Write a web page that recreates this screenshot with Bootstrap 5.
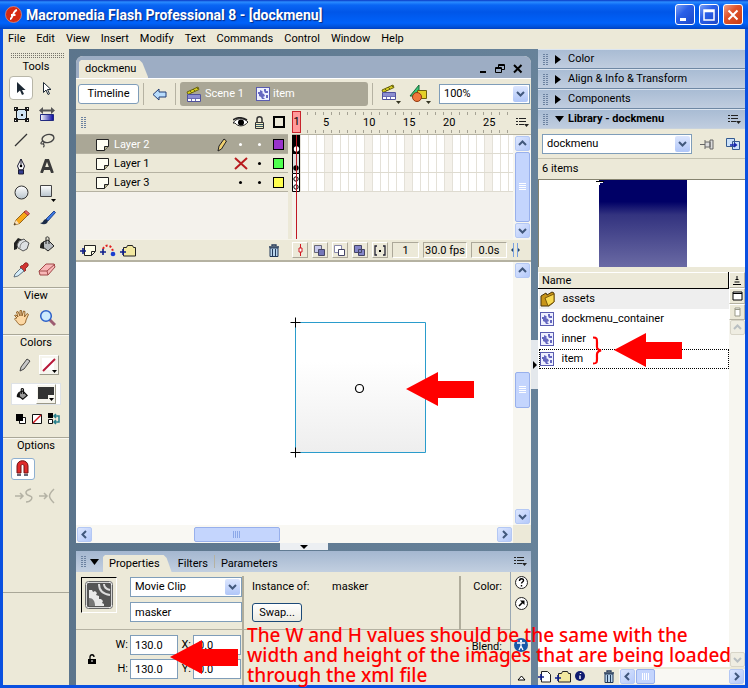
<!DOCTYPE html>
<html lang="en">
<head>
<meta charset="utf-8">
<meta name="viewport" content="width=device-width, initial-scale=1">
<title>Macromedia Flash Professional 8 - [dockmenu]</title>
<link rel="stylesheet" href="https://cdn.jsdelivr.net/npm/bootstrap@5.3.0/dist/css/bootstrap.min.css">
<style>
:root{--face:#ece9d8;--slate:#5f7990;--line:#aca899;--blue:#0a50e0}
body{font:11px/14px Roboto,"Liberation Sans",sans-serif;color:#000;background:var(--face)}
button,input,select{font:inherit;color:inherit}
button{padding:0;border:0;background:none;display:flex;align-items:center;justify-content:center}
svg{display:block;flex:none}
.app{min-height:100vh;border:solid var(--blue);border-width:0 3px 3px}
/* window chrome */
.titlebar{height:29px;background:linear-gradient(#0a38c4,#2a8cff 2px,#0a66f4 5px,#0056e8 12px,#0062fa 23px,#0050d8 27px,#0040c0);margin:0 -3px;padding:0 5px;color:#fff}
.titlebar h1{font:bold 14px/18px Roboto,sans-serif;text-shadow:1px 1px 1px #0a2a80}
.winbtn{width:20px;height:21px;border:1px solid #fff;border-radius:3px;background:linear-gradient(135deg,#7ba0f6,#2a5fe8 40%,#1c48c8)}
.winbtn.closebtn{background:linear-gradient(135deg,#f0a088,#e0542c 40%,#c83c14)}
.menus{height:20px;padding:0 5px;gap:11px}
.menus a,.crumbs a{color:inherit;text-decoration:none}
.work{background:linear-gradient(90deg,#5a738a,#6c88a0) var(--slate)}
/* tools */
.toolcol{width:66px;background:var(--face)}
.grip-h{height:5px;margin:4px 4px 1px 7px;background:conic-gradient(#77756c 25%,transparent 0) 0 0/2px 2px}
.grip-v{width:6px;height:11px;background:conic-gradient(#6c82a0 25%,transparent 0) 0 0/3px 2px;flex:none}
.tgrid{display:grid;grid-template-columns:26px 26px;grid-auto-rows:26px;margin-left:5px}
.tgrid .picked{background:#fff;border:1px solid #b8b6a8;border-radius:4px;margin:1px}
.sec{border-top:1px solid #a9a798;box-shadow:inset 0 1px #f8f7f0}
.sec p,.caption{margin:0;text-align:center;line-height:16px}
.swatchbtn{width:20px;height:20px;border:1px solid #9a9888;border-top-color:#fff;border-left-color:#fff;background:#f6f5ee}
.toolend{margin-top:88px}
.magnet{border:1px solid #8fb0d0;border-radius:3px;background:#fff}
/* document */
.center{padding:7px 0 0 7px;min-width:0}
.doc{border-radius:7px 7px 0 0;background:var(--face);overflow:hidden}
.tabstrip{height:23px;background:#9dadc4;border-bottom:1px solid #fff;padding-left:3px}
.doctab{height:18px;padding:0 12px 0 6px;background:var(--face);clip-path:polygon(0 2px,2px 0,calc(100% - 9px) 0,calc(100% - 6px) 3px,100% 100%,0 100%)}
.editbar{height:31px;padding:0 1px 0 2px;border-bottom:1px solid #b5b2a2}
.editbar .xp-select{width:91px;height:20px}
.timelinebtn{width:61px;height:20px;border:1px solid #7f9db9;border-radius:3px;background:#fff}
.crumbs{height:24px;background:#aaa796;color:#fff;border-radius:3px;padding:0 6px;min-width:0}
.crumbs a{padding:0 12px 0 3px}
.vline{width:1px;align-self:stretch;background:#b5b2a2}
.editbar .vline{margin-top:4px;margin-bottom:4px}
.xp-select{position:relative}
.xp-select select{display:block;width:100%;height:100%;appearance:none;border:1px solid #7f9db9;border-radius:0;background:#fff;padding:0 18px 0 4px}
.xp-select svg{position:absolute;right:2px;top:2px;height:calc(100% - 4px);pointer-events:none}
.xp-input{border:1px solid #7f9db9;background:#fff;padding:0 4px;min-width:0;height:20px;border-radius:0}
/* timeline */
.timeline{height:150px;display:grid;grid-template-columns:212px minmax(0,1fr) 18px;grid-template-rows:25px minmax(0,1fr) 21px;background:var(--face)}
.lhead{border-bottom:1px solid #b5b2a2}
.layers{background:#f4f2ec}
.layer{height:19px;background:var(--face);border-bottom:1px solid #b5b2a2;padding:1px 0 0 20px}
.layer.sel{background:#aaa796;color:#fff}
.layer span{flex:1;padding-left:5px}
.lcol{width:19px;display:flex;justify-content:center;align-items:center}
.outline-box{width:11px;height:11px;border:1px solid #000}
.violet{background:#9933cc}
.green{background:#4fff4f}
.yellow{background:#ffff4f}
.dot{width:3px;height:3px;border-radius:50%;background:currentColor}
.ruler{margin-left:4px;border-bottom:1px solid #b5b2a2;position:relative;overflow:hidden;background:repeating-linear-gradient(90deg,#a5a294 0 1px,transparent 1px 8px) 7px 2px/100% 3px no-repeat,repeating-linear-gradient(90deg,#a5a294 0 1px,transparent 1px 8px) 7px 20px/100% 3px no-repeat}
.ruler ol{list-style:none;display:flex;margin:0;padding:6px 0 0 31px}
.ruler li{width:40px;flex:none}
.frames{margin-left:4px;position:relative;background:#f4f2ec;min-height:0}
.frow{height:19px;border-bottom:1px solid #dedbd0;background:repeating-linear-gradient(90deg,#e4e1d8 0 1px,transparent 1px 8px) 0 0,repeating-linear-gradient(90deg,#fff 0 32px,#f4f1ea 32px 40px) 0 0}
.playhead{position:absolute;left:0;top:1px;width:9px;height:22px;border:1px solid #c8242c;background:#ff9a9a;line-height:20px;text-align:center}
.playline{position:absolute;left:4px;top:0;bottom:0;width:1px;background:#c01824}
.tbar{border-top:1px solid #f6f4ea;padding:0 4px;background:var(--face)}
.framebar{grid-column:2 / 4;overflow:hidden}
.fbtn{width:16px;height:16px;border:1px solid #fff;border-right-color:#aca899;border-bottom-color:#aca899;flex:none}
.readout{width:27px;height:16px;border:1px solid #fff;border-top-color:#aca899;border-left-color:#aca899;text-align:center;line-height:15px;white-space:nowrap;flex:none}
.readout.rate{width:44px}
.readout.time{width:36px}
/* scrollbars */
.sbtn{width:15px;height:15px;border-radius:2px;border:1px solid #b4c8f4;background:linear-gradient(135deg,#dce6fe,#b4c9fa);flex:none}
.sbtn.off{border-color:#d8d5c8;background:#efede2}
.thumb{border-radius:2px;border:1px solid #98b0ec;background:#c4d5fd;display:flex;align-items:center;justify-content:center;flex:none}
.vs{display:flex;flex-direction:column;align-items:center;background:#f7f6f0;gap:1px;padding:1px 0}
.vs .thumb{width:15px}
.vs .tall{flex:1}
.hs{display:flex;align-items:center;background:#f9f8f3;gap:1px;padding:0 1px;min-width:0}
.hs .thumb{height:15px}
.grow-a{flex:93}
.grow-b{flex:101}
.grow-c{flex:216}
#thumbStageV{height:36px}
#thumbStageH{width:86px}
#thumbLib{width:19px}
/* stage */
.stagewrap{display:grid;grid-template-columns:minmax(0,1fr) 18px;grid-template-rows:minmax(0,1fr) 18px;border-top:2px solid #b5b2a2;background:var(--face)}
.stage{background:#fff;position:relative;overflow:hidden;min-height:200px}
.stage-item{position:absolute;left:213px;top:54px}
.handle button{width:48px;background:#eceff2;height:7px}
.handle{height:8px}
/* properties */
.props{position:relative;background:var(--face)}
.ptabs{height:21px;background:linear-gradient(#a4b7d0,#c2cfe0)}
.ptab{padding:0 6px;height:17px;align-self:flex-end}
.ptab.on{background:var(--face);padding-right:12px;clip-path:polygon(0 2px,2px 0,calc(100% - 8px) 0,calc(100% - 5px) 3px,100% 100%,0 100%)}
.prow1{height:58px;border-bottom:1px solid #b5b2a2}
.thumbpic{width:36px;height:36px;margin:5px 13px 0 5px;border:1px solid #000;border-right-color:#fff;border-bottom-color:#fff;display:flex;align-items:center;justify-content:center}
.namefields{width:112px;padding-top:5px}
.symsel{height:20px}
.instname{margin-top:5px}
.leftprops{width:166px}
.whgrid{display:grid;grid-template-columns:26px 48px 15px 48px;row-gap:4px;align-items:center;margin-left:28px;padding:5px 0 6px}
.whgrid label{text-align:right;padding-right:2px}
.lock{position:absolute;left:12px;top:24px}
.inst{width:80px}
.swapbtn{width:50px;height:19px;margin-top:9px;border:1px solid #1c4a78;border-radius:3px;background:linear-gradient(#fff,#ecebe2)}
.thick{width:2px;background:#b0ad9c;align-self:stretch}
.colorsep{flex:none;align-self:flex-start;height:54px;margin-top:4px}
.colorcol{width:49px}
.blendlbl{padding-top:10px}
.iconcol{width:21px;border-left:1px solid #9aa8b4}
.accbtn{margin-top:24px}
.note{position:absolute;z-index:5;color:#f00;margin:0;white-space:nowrap}
.bigtext{left:171px;top:74px;font:500 19px/20px "Noto Sans","Open Sans",sans-serif}
#arrowStage{left:330px;top:109px}
#arrowProps{left:94px;top:88px}
#arrowLib{left:76px;top:60px}
#brace{left:54px;top:64px}
/* library column */
.right{width:214px;padding-left:7px}
.panelhead{height:20px;background:linear-gradient(#a9bcd4,#c0cddf);border-bottom:1px solid #6f88a4;border-top:1px solid #dce5f0;padding-left:4px;gap:7px;margin:0;font:inherit}
.panelhead.open{font-weight:bold;border-bottom-color:#c8d2dc}
.panelhead .tri{margin-right:-3px}
.sidehandle{position:absolute;left:0;top:291px;width:7px;height:49px;background:#e4e8ec}
.lib{background:var(--face);min-height:0}
.libsel{height:29px}
.libsel .xp-select{width:150px;height:20px}
.itemcount{height:21px;border-top:1px solid #c4c1b0}
.preview{height:88px;background:#fff;border:1px solid #85836f;border-right:0;border-bottom:0}
.preview div{width:88px;height:87px;margin-left:60px;background:linear-gradient(#000066 25%,#33337f 40%,#6a6aa4)}
.preview svg{margin-left:-3px}
.listwrap{padding-top:5px}
.libtable{background:#fff}
.libtable table{width:100%;border-collapse:collapse}
.libtable th{font-weight:normal;height:16px;background:var(--face);border:1px solid #fff;border-bottom:1px solid #000;border-right:1px solid #000;padding:0 3px}
.libtable td{height:20px;padding:0 1px}
.libtable tr.folder td{background:#eee}
.libtable tr.focus td{outline:1px dotted #000;outline-offset:-1px}
.iname{padding-left:8px}
.sidebtn{width:16px;height:16px;background:var(--face);border:1px solid #fff;border-right-color:#b5b2a2;border-bottom-color:#b5b2a2}
.sidecol{width:16px}
.libfoot{height:18px}
.libhs{width:126px}
</style>
<script src="https://cdn.jsdelivr.net/npm/bootstrap@5.3.0/dist/js/bootstrap.bundle.min.js"></script>
</head>
<body>
<svg width="0" height="0" class="position-absolute" aria-hidden="true">
 <defs>
  <linearGradient id="gBlue" x2="1"><stop stop-color="#fff"/><stop offset="1" stop-color="#0808a0"/></linearGradient>
  <linearGradient id="gGrey" x2="0" y2="1"><stop stop-color="#fff"/><stop offset="1" stop-color="#b8c4cc"/></linearGradient>
  <linearGradient id="gChev" x2="0" y2="1"><stop stop-color="#dce6fe"/><stop offset="1" stop-color="#b0c6f8"/></linearGradient>
  <linearGradient id="gBox" x2="0" y2="1"><stop offset=".3" stop-color="#fff"/><stop offset="1" stop-color="#eee"/></linearGradient>
 </defs>
 <symbol id="up" viewBox="0 0 9 9"><path d="M1 6 4.500 2.500 8 6" fill="none" stroke="#41587c" stroke-width="2"/></symbol>
 <symbol id="down" viewBox="0 0 9 9"><path d="M1 3 4.500 6.500 8 3" fill="none" stroke="#41587c" stroke-width="2"/></symbol>
 <symbol id="left" viewBox="0 0 9 9"><path d="M6 1 2.500 4.500 6 8" fill="none" stroke="#41587c" stroke-width="2"/></symbol>
 <symbol id="right" viewBox="0 0 9 9"><path d="M3 1 6.500 4.500 3 8" fill="none" stroke="#41587c" stroke-width="2"/></symbol>
 <symbol id="drop" viewBox="0 0 15 16" preserveAspectRatio="none"><rect width="15" height="16" rx="2" fill="url(#gChev)"/><path d="M4 6 7.500 9.500 11 6" fill="none" stroke="#41587c" stroke-width="2"/></symbol>
 <symbol id="optmenu" viewBox="0 0 13 11"><path d="M0 1.500h2M0 4.500h2M0 7.500h2M3 1.500h7M3 4.500h7M3 7.500h5" stroke="#222"/><path d="M8 7h5l-2.500 3z" fill="#222"/></symbol>
 <symbol id="clip" viewBox="0 0 14 14"><rect x=".5" y=".5" width="13" height="13" fill="#eef0fe" stroke="#5a5cb0"/><path d="M2 5h2V3l2 1 1 1-1 1 2 1 1 2-2 1 2 2H6L5 10 3 9V7H2zM8 2h2v2h2v2H9L8 4zM10 8h2v3h-2z" fill="#6668c0"/></symbol>
 <symbol id="scene" viewBox="0 0 16 17"><path d="M1 6 12 1l1 2.500L2 8.500z" fill="#d8d020" stroke="#6a6410"/><path d="m4 5 2 2m1-4 2 2m1-4 2 2" stroke="#6a6410"/><path d="M1.500 8.500h13v7h-13z" fill="#fff" stroke="#50529c"/><path d="M2 9h12v3H2z" fill="#8c8ed0"/><path d="M2 12.500h12M5.500 12v3M9.500 12v3" stroke="#6a6cb4"/></symbol>
 <symbol id="page" viewBox="0 0 13 12"><path d="M.5.500h12v7l-4 4h-8z" fill="#fffff4" stroke="#222"/><path d="M12.500 7.500h-4v4" fill="#b8b490" stroke="#222"/></symbol>
 <symbol id="bin" viewBox="0 0 12 13"><path d="M4 2V1h4v1M1 3h10" stroke="#223858" fill="none" stroke-width="1.300"/><path d="M2 4h8v8.500H2z" fill="#b8d4ec" stroke="#223858"/><path d="M4.500 5v7M7.500 5v7" stroke="#223858"/></symbol>
 <symbol id="arrow" viewBox="0 0 68 36"><path d="M0 18 32 1v9h36v17H32v8z" fill="#f00"/></symbol>
 <symbol id="addfolder" viewBox="0 0 16 13"><path d="M3.500 3.500h3l1-2h5l1 2h2v8.500h-12z" fill="#f2e8a0" stroke="#222"/><path d="M0 8h6M3 5v6" stroke="#10208c" stroke-width="1.600"/></symbol>
 <symbol id="addpage" viewBox="0 0 16 13"><path d="M4.500 1.500h11v6l-4 4h-7z" fill="#fdfde8" stroke="#222"/><path d="M15 7.500h-3.500v4" fill="none" stroke="#222"/><path d="M0 7h6M3 4v6" stroke="#10208c" stroke-width="1.600"/></symbol>
</svg>

<div class="app d-flex flex-column">
 <header class="titlebar d-flex align-items-center">
  <svg width="17" height="17" viewBox="0 0 17 17"><circle cx="8.500" cy="8.500" r="8" fill="#d42a12" stroke="#f4a890" stroke-width=".6"/><path d="M5 13c3 0 2.500-8 7-9M6 9h4.500" fill="none" stroke="#fff" stroke-width="1.800"/></svg>
  <h1 class="m-0 ms-1 flex-grow-1 text-nowrap">Macromedia Flash Professional 8 - [dockmenu]</h1>
  <div class="d-flex gap-1">
   <button class="winbtn" aria-label="Minimize"><svg width="12" height="12"><path d="M1 9h6v3H1z" fill="#fff"/></svg></button>
   <button class="winbtn" aria-label="Restore"><svg width="12" height="12"><path d="M1 1h10v10H1zM1 2.500h10" fill="none" stroke="#fff" stroke-width="1.500"/></svg></button>
   <button class="winbtn closebtn" aria-label="Close"><svg width="12" height="12"><path d="m1.500 1.500 9 9m0-9-9 9" stroke="#fff" stroke-width="2"/></svg></button>
  </div>
 </header>
 <nav class="menus d-flex align-items-center">
  <a href="#">File</a><a href="#">Edit</a><a href="#">View</a><a href="#">Insert</a><a href="#">Modify</a><a href="#">Text</a><a href="#">Commands</a><a href="#">Control</a><a href="#">Window</a><a href="#">Help</a>
 </nav>

 <div class="work d-flex flex-grow-1">
  <aside class="toolcol flex-shrink-0">
   <div class="grip-h"></div>
   <p class="caption">Tools</p>
   <div class="tgrid">
    <button class="picked" aria-label="Selection"><svg width="10" height="15"><path d="M1 1v11l3-2.500L6 14l2-1-2-4h3.500z" fill="#1c2834"/></svg></button>
    <button aria-label="Subselection"><svg width="10" height="15"><path d="M1.500 1.500v10L4 9l2 4.500 1.500-.7L5.500 8.500H9z" fill="#fff" stroke="#1c2834"/></svg></button>
    <button aria-label="Free Transform"><svg width="15" height="15"><path d="M2 2h11v11H2z" fill="#cfe4f4"/><path d="M2.500 2.500h10v10h-10z" fill="none" stroke="#111"/><path d="M0 0h4v4H0zM11 0h4v4h-4zM0 11h4v4H0zM11 11h4v4h-4zM7 7h2v2H7z" fill="#1a1a1a"/><path d="M1 1h1v1H1zM13 1h1v1h-1zM1 13h1v1H1zM13 13h1v1h-1z" fill="#fff"/></svg></button>
    <button aria-label="Gradient Transform"><svg width="16" height="15"><path d="M0 3.500 4 0v2.500h8V0l4 3.500L12 7V4.500H4V7z" fill="#555"/><path d="M1.500 7.500h13v6h-13z" fill="url(#gBlue)" stroke="#222a80"/></svg></button>
    <button aria-label="Line"><svg width="14" height="14"><path d="M1 13 13 1" stroke="#333" stroke-width="1.300"/></svg></button>
    <button aria-label="Lasso"><svg width="16" height="15"><ellipse cx="9" cy="5.500" rx="6" ry="4" transform="rotate(-14 9 5.500)" fill="none" stroke="#444" stroke-width="1.400"/><path d="M4 8c-2 1-3 3-1 3s3-2 1-3M4 11c2 1 1 3 0 3" fill="none" stroke="#444" stroke-width="1.200"/></svg></button>
    <button aria-label="Pen"><svg width="10" height="17"><path d="m5 1 3.500 7L7 12H3L1.500 8z" fill="#fff" stroke="#1c1c34"/><path d="M5 1v7" stroke="#1c1c34"/><circle cx="5" cy="8" r="1.300"/><path d="M2.500 12h5v4h-5z" fill="#333c90" stroke="#1c1c34"/></svg></button>
    <button aria-label="Text"><svg width="14" height="14"><path d="M1.500 14 6 1.500h2L12.500 14M3.500 9.500h7" fill="none" stroke="#3a3a3a" stroke-width="2.800"/></svg></button>
    <button aria-label="Oval"><svg width="15" height="15"><circle cx="7.500" cy="7.500" r="6.500" fill="url(#gGrey)" stroke="#333"/></svg></button>
    <button aria-label="Rectangle"><svg width="18" height="19"><path d="M2.500 2.500h11v11h-11z" fill="url(#gGrey)" stroke="#444"/><path d="M13 16h5l-2.500 3z"/></svg></button>
    <button aria-label="Pencil"><svg width="17" height="16"><path d="m1 15 2-5 9-9 3.500 3.500-9 9z" fill="#f8a818" stroke="#7a4a08" stroke-width=".8"/><path d="m11 2 2-1.500 3.500 3L15 5.500z" fill="#e86868" stroke="#8c2020" stroke-width=".7"/><path d="m1 15 2-5 3 3.500z" fill="#fbe0b8"/><path d="m1 15 .8-2 1.200 1.200z"/></svg></button>
    <button aria-label="Brush"><svg width="17" height="16"><path d="m7 9 8-8 1.500 1.500L9 11z" fill="#3c78e0" stroke="#10307c" stroke-width=".8"/><path d="M1 13c4 0 3-4 6-4l2 2c-1 4-5 4-8 2z" fill="#1c2c48"/></svg></button>
    <button aria-label="Ink Bottle"><svg width="17" height="15"><path d="M1 13V6l4-5 5 2-5 3-1 6z" fill="#222"/><path d="m4 8 2-4 5-2 2 2 3 2-2 6-4 2-3-2-2-1z" fill="#dde0e2" stroke="#555"/><path d="M7 11c0-4 2-6 6-7" fill="none" stroke="#777"/></svg></button>
    <button aria-label="Paint Bucket"><svg width="16" height="16"><path d="M4 6 9 4l6 6-6 5-5-4z" fill="#b8bcc0" stroke="#222"/><path d="M1 12c0-4 1-6 4-6v7z" fill="#222"/><path d="M7 8V2c0-2 3-1 3 0v6" fill="none" stroke="#222"/></svg></button>
    <button aria-label="Eyedropper"><svg width="17" height="16"><path d="M9 4l3-3c2-1 4 1 3 3l-3 3 1 1-1.500 1.500L7 5l1.500-1.500z" fill="#d03430" stroke="#701010" stroke-width=".7"/><path d="m8 6 3 3-6 5-4 1 1-3z" fill="#d4ecf8" stroke="#456" stroke-width=".8"/></svg></button>
    <button aria-label="Eraser"><svg width="18" height="14"><path d="M1 8 8 1h8l1 3-7 8H2z" fill="#f8b8b8" stroke="#a04848"/><path d="M1 8h8l8-7M9 8l1 4" fill="none" stroke="#a04848"/></svg></button>
   </div>
   <div class="sec mt-1">
    <p>View</p>
    <div class="tgrid pb-1">
     <button aria-label="Hand"><svg width="17" height="17"><path d="M4 9 1.500 6.500 3 6l2 2L3.500 3 5 2.500 7 7V1.500h1.500L9 7l1.500-5L12 2.500 11.500 8 14 4.500l1.500 1L13 11c0 3-2 5-5 5s-4-4-6.500-6L3 9z" fill="#fcd8a4" stroke="#8a5a20" stroke-width=".9"/></svg></button>
     <button aria-label="Zoom"><svg width="17" height="17"><path d="m10 10 6 6" stroke="#9c5c70" stroke-width="3"/><circle cx="7" cy="7" r="5.300" fill="#cdeafc" stroke="#2c60c8" stroke-width="1.500"/></svg></button>
    </div>
   </div>
   <div class="sec">
    <p>Colors</p>
    <div class="d-flex align-items-center gap-2 ps-3 py-1">
     <svg width="12" height="14"><path d="m1 13 1-4 6-8 3 2-6 8z" fill="#c8c8c8" stroke="#444"/></svg>
     <button class="swatchbtn" aria-label="Stroke color"><svg width="17" height="17"><path d="M1 1h12v12H1z" fill="#fff"/><path d="m2 14 12-12" stroke="#b81838" stroke-width="2"/><path d="M11 13h5l-2.500 3z"/></svg></button>
    </div>
    <div class="d-flex align-items-center gap-2 bg-white border mt-1 ps-1 ms-2 me-2">
     <svg width="12" height="14" viewBox="0 0 16 16"><path d="M4 6 9 4l6 6-6 5-5-4z" fill="#999" stroke="#111" stroke-width="1.500"/><path d="M1 12c0-4 1-6 4-6v7z" fill="#111"/><path d="M7 8V2c0-2 3-1 3 0v6" fill="none" stroke="#111" stroke-width="1.500"/></svg>
     <button class="swatchbtn" aria-label="Fill color"><svg width="18" height="17"><path d="M1 1h16v12H1z" fill="#333"/><path d="M11 9h7v8h-7z" fill="#f6f5ee"/><path d="M12 12h5l-2.500 3z"/></svg></button>
    </div>
    <div class="d-flex align-items-center gap-1 ps-2 py-2 ms-1">
     <button aria-label="Black and white"><svg width="12" height="12"><path d="M4.500 4.500h6v6h-6z" fill="#fff" stroke="#111"/><path d="M1 1h7v7H1z"/></svg></button>
     <button aria-label="No color"><svg width="12" height="12"><path d="M1.500 1.500h9v9h-9z" fill="#fff" stroke="#111"/><path d="m2 10 8-8" stroke="#d01820" stroke-width="1.500"/></svg></button>
     <button aria-label="Swap colors"><svg width="14" height="12"><path d="M1 0h5v5H1z"/><path d="M1.500 6.500h4v4h-4z" fill="#fff" stroke="#111"/><path d="M7 3h5v6H8m1-8L7 3l2 2m0 2L7 9l2 2" fill="none" stroke="#28808c" stroke-width="1.500"/></svg></button>
    </div>
   </div>
   <div class="sec mt-1">
    <p>Options</p>
    <button class="magnet ms-2 mt-1" aria-label="Snap to Objects"><svg width="22" height="20"><path d="M5 14V7c0-7 11-7 11 0v7h-4V7c0-2-3-2-3 0v7z" fill="#e02828" stroke="#701010"/><path d="M5 15h4v2H5zM12 15h4v2h-4z" fill="#667"/></svg></button>
    <svg class="ms-2 mt-2" width="46" height="16" fill="none" stroke="#b4b2a4" stroke-width="1.500"><path d="M4 8h7M9 5l3 3-3 3M20 1c-8 2-5 6-1 7s1 6-4 6M28 8h7M33 5l3 3-3 3M43 1c-6 6-6 8 0 14"/></svg>
   </div>
   <div class="sec toolend"></div>
  </aside>

  <main class="center flex-grow-1 d-flex flex-column">
   <section class="doc d-flex flex-column flex-grow-1">
    <div class="tabstrip d-flex align-items-end">
     <button class="doctab">dockmenu</button>
     <div class="ms-auto d-flex gap-2 pe-2 pb-1 align-items-center">
      <button aria-label="Minimize document"><svg width="8" height="11"><path d="M1 8h6v2H1z"/></svg></button>
      <button aria-label="Restore document"><svg width="10" height="11"><path d="M3.500 4V1.500h6v5H7M.5 4.500h6v5h-6zM1 5.500h6M4 2.500h6" fill="none" stroke="#000"/></svg></button>
      <button aria-label="Close document"><svg width="10" height="11"><path d="m1 2 7.500 7.500m0-7.500L1 9.500" stroke="#000" stroke-width="2"/></svg></button>
     </div>
    </div>
    <div class="editbar d-flex align-items-center">
     <button class="timelinebtn">Timeline</button>
     <div class="vline ms-1"></div>
     <button class="mx-2" aria-label="Back"><svg width="15" height="13"><path d="M1 6.500 7 1v3h7v5H7v3z" fill="#b8dcfc" stroke="#203c74"/></svg></button>
     <div class="vline me-1"></div>
     <nav class="crumbs d-flex align-items-center flex-grow-1" aria-label="Edit path">
      <svg width="16" height="17"><use href="#scene"/></svg><a class="text-nowrap" href="#">Scene 1</a>
      <svg width="14" height="14"><use href="#clip"/></svg><a href="#">item</a>
     </nav>
     <div class="vline mx-1"></div>
     <button class="mx-1" aria-label="Edit scene"><svg width="20" height="20"><use href="#scene" width="16" height="17"/><path d="M15 17h5l-2.500 3z" fill="#332"/></svg></button>
     <button class="mx-1" aria-label="Edit symbols"><svg width="22" height="20"><path d="M1 12 10 1v11z" fill="#38c878" stroke="#186838"/><path d="M8.500 6.500h9v8h-9z" fill="#e4d028" stroke="#6c6010"/><circle cx="8" cy="13" r="4.500" fill="#f0783c" stroke="#903810"/><path d="M17 17h5l-2.500 3z" fill="#332"/></svg></button>
     <div class="xp-select ms-1"><select aria-label="Zoom level"><option>100%</option></select><svg width="15"><use href="#drop" width="15" height="16"/></svg></div>
    </div>

    <div class="timeline">
     <div class="lhead d-flex align-items-center ps-1">
      <div class="grip-v me-auto"></div>
      <span class="lcol"><svg width="15" height="10"><path d="M0 6c3-5 10-6 15-1-4 5-10 5-13 1z" fill="#fff" stroke="#222"/><circle cx="8" cy="5.500" r="3"/><path d="M0 3c4-3 9-3 14 0" fill="none" stroke="#222" stroke-width="1.500"/></svg></span>
      <span class="lcol"><svg width="11" height="13"><path d="M3 6V3c0-3 5-3 5 0v3" fill="none" stroke="#333" stroke-width="1.500"/><path d="M1.500 6.500h8v6h-8z" fill="#f4ecc0" stroke="#333"/><path d="M2 8.500h7M2 10.500h7" stroke="#356"/></svg></span>
      <span class="lcol"><svg width="12" height="12"><path d="M1 1h10v10H1z" fill="none" stroke="#000" stroke-width="2"/></svg></span>
     </div>
     <div class="ruler"><ol><li>5</li><li>10</li><li>15</li><li>20</li><li>25</li></ol><div class="playhead">1</div></div>
     <div class="lhead d-flex align-items-center justify-content-center"><button aria-label="Timeline options"><svg width="13" height="11"><use href="#optmenu"/></svg></button></div>

     <div class="layers">
      <div class="layer sel d-flex align-items-center"><svg width="13" height="12"><use href="#page"/></svg><span>Layer 2</span><svg class="me-1" width="10" height="14"><path d="m1 13 1-5 5-7 2.500 2-5 8z" fill="#f0d070" stroke="#222"/></svg><i class="lcol"><b class="dot"></b></i><i class="lcol"><b class="dot"></b></i><i class="lcol"><b class="outline-box violet"></b></i></div>
      <div class="layer d-flex align-items-center"><svg width="13" height="12"><use href="#page"/></svg><span>Layer 1</span><i class="lcol"><svg width="14" height="13"><path d="m1 1 12 11M13 1 1 12" stroke="#b81c20" stroke-width="2"/></svg></i><i class="lcol"><b class="dot"></b></i><i class="lcol"><b class="outline-box green"></b></i></div>
      <div class="layer d-flex align-items-center"><svg width="13" height="12"><use href="#page"/></svg><span>Layer 3</span><i class="lcol"><b class="dot"></b></i><i class="lcol"><b class="dot"></b></i><i class="lcol"><b class="outline-box yellow"></b></i></div>
     </div>
     <div class="frames">
      <div class="frow"><svg width="8" height="19"><path d="M0 0h8v19H0z"/><circle cx="4.500" cy="14" r="2.700" fill="#fff"/></svg></div>
      <div class="frow"><svg width="8" height="19"><path d="M0 0h8v19H0z" fill="#ddd"/><path d="M7.500 0v19M.5 0v19" stroke="#000"/><circle cx="4" cy="14" r="2.700"/></svg></div>
      <div class="frow"><svg width="8" height="19"><path d="M.5.500h7v18h-7z" fill="#fff" stroke="#000"/><circle cx="4" cy="14" r="2.200" fill="#fff" stroke="#000"/><circle cx="4" cy="6" r="2.200" fill="#fff" stroke="#000"/></svg></div>
      <div class="playline"></div>
     </div>
     <div class="vs">
      <button class="sbtn" aria-label="Scroll up"><svg width="9" height="9"><use href="#up"/></svg></button>
      <div class="thumb tall"><svg width="7" height="8"><path d="M0 .5h7M0 2.500h7M0 4.500h7M0 6.500h7" stroke="#fff"/></svg></div>
      <button class="sbtn" aria-label="Scroll down"><svg width="9" height="9"><use href="#down"/></svg></button>
     </div>

     <div class="tbar d-flex align-items-center gap-1">
      <button aria-label="Insert layer"><svg width="16" height="13"><use href="#addpage"/></svg></button>
      <button aria-label="Add motion guide"><svg width="16" height="13"><path d="M3 5c2-5 9-5 10 3" fill="none" stroke="#e02020" stroke-width="2" stroke-dasharray="2 2"/><circle cx="13" cy="10" r="2.300" fill="#1c40d0"/><path d="M0 8h6M3 5v6" stroke="#10208c" stroke-width="1.600"/></svg></button>
      <button aria-label="Insert folder"><svg width="16" height="13"><use href="#addfolder"/></svg></button>
      <button class="ms-auto me-1" aria-label="Delete layer"><svg width="12" height="13"><use href="#bin"/></svg></button>
     </div>
     <div class="tbar framebar d-flex align-items-center gap-1">
      <button class="fbtn" aria-label="Center frame"><svg width="9" height="12"><path d="M4.500 0v12" stroke="#d01820"/><path d="M3 4h3v4H3z" fill="#fff" stroke="#d01820"/></svg></button>
      <button class="fbtn" aria-label="Onion skin"><svg width="12" height="11"><path d="M.5.500h7v7h-7z" fill="#c8caec" stroke="#667"/><path d="M4.500 4.500h6v6h-6z" fill="#7476b8" stroke="#446"/></svg></button>
      <button class="fbtn" aria-label="Onion skin outlines"><svg width="12" height="11"><path d="M.5.500h7v7h-7z" fill="#fff" stroke="#88a"/><path d="M4.500 4.500h6v6h-6z" fill="#fff" stroke="#446"/></svg></button>
      <button class="fbtn" aria-label="Edit multiple frames"><svg width="12" height="11"><path d="M.5.500h7v7h-7zM4.500 4.500h6v6h-6z" fill="#8486c8" stroke="#446"/></svg></button>
      <button class="fbtn" aria-label="Modify onion markers"><svg width="12" height="11"><path d="M3 1H1v9h2M9 1h2v9H9" fill="none" stroke="#223" stroke-width="1.300"/><path d="M5 5h2v2H5z"/></svg></button>
      <div class="readout">1</div>
      <div class="readout rate">30.0 fps</div>
      <div class="readout time">0.0s</div>
      <svg width="9" height="14"><path d="M2.500 0v14M6.500 0v14" stroke="#7ba0e0"/><path d="M2 5v4L0 7zM7 5v4l2-2z" fill="#246"/></svg>
     </div>
    </div>

    <div class="stagewrap flex-grow-1">
     <div class="stage">
      <svg class="stage-item" width="140" height="144"><path d="M6.500 6.500h130v130h-130z" fill="url(#gBox)" stroke="#2a9ccc"/><path d="M1.500 6.500h10M6.500 1.500v10M1.500 136.500h10M6.500 131.500v10" stroke="#000"/><circle cx="70.500" cy="72.500" r="4" fill="#fff" stroke="#000" stroke-width="1.200"/></svg>
      <svg class="note" id="arrowStage" width="68" height="36"><use href="#arrow"/></svg>
     </div>
     <div class="vs">
      <button class="sbtn" aria-label="Scroll up"><svg width="9" height="9"><use href="#up"/></svg></button>
      <div class="grow-a"></div>
      <div class="thumb" id="thumbStageV"><svg width="7" height="8"><path d="M0 .5h7M0 2.500h7M0 4.500h7M0 6.500h7" stroke="#fff"/></svg></div>
      <div class="grow-b"></div>
      <button class="sbtn" aria-label="Scroll down"><svg width="9" height="9"><use href="#down"/></svg></button>
     </div>
     <div class="hs">
      <button class="sbtn" aria-label="Scroll left"><svg width="9" height="9"><use href="#left"/></svg></button>
      <div class="grow-b"></div>
      <div class="thumb" id="thumbStageH"><svg width="8" height="7"><path d="M.5 0v7M2.500 0v7M4.500 0v7M6.500 0v7" stroke="#8ca8e8"/></svg></div>
      <div class="grow-c"></div>
      <button class="sbtn" aria-label="Scroll right"><svg width="9" height="9"><use href="#right"/></svg></button>
     </div>
    </div>
   </section>
   <div class="handle d-flex justify-content-center"><button aria-label="Collapse properties"><svg width="8" height="4"><path d="M0 0h8L4 4z"/></svg></button></div>

   <section class="props">
    <div class="ptabs d-flex align-items-center ps-1 pe-1">
     <div class="grip-v"></div><svg class="mx-1" width="9" height="8"><path d="M0 1h9L4.500 7z"/></svg>
     <button class="ptab on">Properties</button><button class="ptab">Filters</button><div class="vline my-1"></div><button class="ptab">Parameters</button>
     <button class="ms-auto" aria-label="Panel options"><svg width="13" height="11"><use href="#optmenu"/></svg></button>
    </div>
    <div class="d-flex">
     <div class="leftprops">
      <div class="prow1 d-flex">
       <div class="thumbpic"><svg width="28" height="28"><rect x="1" y="1" width="26" height="26" rx="3" fill="#555" stroke="#fff" stroke-width="1.500"/><rect x=".5" y=".5" width="27" height="27" rx="3" fill="none" stroke="#666"/><path d="M14 3c0 6 4 10 11 11M19 3c0 3 2 5 6 6" fill="none" stroke="#ddd" stroke-width="2"/><path d="M4 9h3l1 2 2-1 2 2-1 2 3 1v3l2 0 2 2-1 2 2 1v2H4z" fill="#e8e8e8"/><path d="M4 17c4 0 6 3 6 8H4z" fill="#777"/></svg></div>
       <div class="namefields">
        <div class="xp-select symsel"><select aria-label="Symbol behavior"><option>Movie Clip</option></select><svg width="15"><use href="#drop" width="15" height="16"/></svg></div>
        <input class="xp-input instname w-100" aria-label="Instance name" value="masker">
       </div>
      </div>
      <div class="position-relative">
       <div class="whgrid">
        <label for="fw">W:</label><input id="fw" class="xp-input" value="130.0"><label for="fx">X:</label><input id="fx" class="xp-input" value="0.0">
        <label for="fh">H:</label><input id="fh" class="xp-input" value="130.0"><label for="fy">Y:</label><input id="fy" class="xp-input" value="0.0">
       </div>
       <svg class="lock" width="8" height="10"><path d="M2 5V3c0-3 4-3 4 0" fill="none" stroke="#000" stroke-width="1.300"/><path d="M0 5h8v5H0z"/><path d="M4 6v2" stroke="#fff"/></svg>
      </div>
     </div>
     <div class="thick mt-1"></div>
     <div class="flex-grow-1">
      <div class="prow1 ps-2 pt-2">
       <div class="d-flex"><span class="inst">Instance of:</span><span>masker</span></div>
       <button class="swapbtn">Swap...</button>
      </div>
     </div>
     <div class="thick colorsep"></div>
     <div class="colorcol">
      <div class="prow1 pt-2 text-end pe-2">Color:</div>
      <div class="text-end pe-2 blendlbl">Blend:</div>
     </div>
     <div class="d-flex flex-column align-items-center gap-1 pt-1 iconcol">
      <button aria-label="Help"><svg width="13" height="13"><circle cx="6.500" cy="6.500" r="6" fill="#fff" stroke="#222"/><path d="M4.500 5c0-3 4-3 4-.5 0 1.500-2 1.500-2 3M6.500 9v1.500" fill="none" stroke="#000" stroke-width="1.400"/></svg></button>
      <button class="mt-1" aria-label="Open in browser"><svg width="13" height="13"><circle cx="6.500" cy="6.500" r="6" fill="#fff" stroke="#222"/><path d="m4 9 4-4" stroke="#000" stroke-width="1.600"/><path d="M5 3.500h4.500V8z"/></svg></button>
      <button class="accbtn" aria-label="Accessibility"><svg width="14" height="14"><circle cx="7" cy="7" r="7" fill="#1858a8"/><path d="M3 5h8M7 5v3l-2 4m2-4 2 4" fill="none" stroke="#fff" stroke-width="1.300"/><circle cx="7" cy="3" r="1.200" fill="#fff"/></svg></button>
      <button class="mt-auto mb-1" aria-label="Show less"><svg width="9" height="6"><path d="M1 5h7L4.500 1z" fill="#fff" stroke="#000"/></svg></button>
     </div>
    </div>
    <svg class="note" id="arrowProps" width="68" height="36"><use href="#arrow"/></svg>
    <p class="note bigtext">The W and H values should be the same with the<br>width and height of the images that are being loaded<br>through the xml file</p>
   </section>
  </main>

  <aside class="right flex-shrink-0 d-flex flex-column position-relative">
   <button class="sidehandle" aria-label="Collapse panels"><svg width="4" height="8"><path d="M0 0v8l4-4z"/></svg></button>
   <h2 class="panelhead d-flex align-items-center"><i class="grip-v"></i><svg width="6" height="9"><path d="M0 0v9l6-4.500z"/></svg>Color</h2>
   <h2 class="panelhead d-flex align-items-center"><i class="grip-v"></i><svg width="6" height="9"><path d="M0 0v9l6-4.500z"/></svg>Align &amp; Info &amp; Transform</h2>
   <h2 class="panelhead d-flex align-items-center"><i class="grip-v"></i><svg width="6" height="9"><path d="M0 0v9l6-4.500z"/></svg>Components</h2>
   <h2 class="panelhead open d-flex align-items-center"><i class="grip-v"></i><svg class="tri" width="9" height="6"><path d="M0 0h9L4.500 6z"/></svg>Library - dockmenu<button class="ms-auto me-1" aria-label="Library options"><svg width="13" height="11"><use href="#optmenu"/></svg></button></h2>
   <div class="lib flex-grow-1 d-flex flex-column">
    <div class="d-flex align-items-center ps-1 libsel">
     <div class="xp-select"><select aria-label="Library document"><option>dockmenu</option></select><svg width="15"><use href="#drop" width="15" height="16"/></svg></div>
     <button class="mx-2" aria-label="Pin library"><svg width="14" height="12"><path d="M0 6.500h5M5 2v9M5 4h5v5H5M10 2v9h3V2z" fill="#ddd" stroke="#666"/></svg></button>
     <button class="ms-1" aria-label="New library panel"><svg width="14" height="12"><path d="M.5.500h8v8h-8zM6.500 3.500h7v8h-7z" fill="#cce2fa" stroke="#345a90"/><path d="M4 7h6M8 5l2.500 2L8 9" fill="none" stroke="#1828b0" stroke-width="1.300"/></svg></button>
    </div>
    <div class="itemcount d-flex align-items-center ps-1">6 items</div>
    <div class="preview"><div><svg width="8" height="5"><path d="M0 1.500h8" stroke="#000"/><path d="M3.500 2v3M4 2.500h3" stroke="#fff"/></svg></div></div>
    <div class="d-flex flex-grow-1 listwrap">
     <div class="libtable flex-grow-1 position-relative">
      <table>
       <thead><tr><th>Name</th></tr></thead>
       <tbody>
        <tr class="folder"><td><div class="d-flex align-items-center"><svg width="15" height="16"><path d="M1 5 6 2l1 2 5-3 2 1v9l-5 4H1z" fill="#c89418" stroke="#4a3408"/><path d="m5 7 9-4v8l-6 4z" fill="#f8d850" stroke="#7a5808"/></svg><span class="iname">assets</span></div></td></tr>
        <tr><td><div class="d-flex align-items-center"><svg width="14" height="14"><use href="#clip"/></svg><span class="iname">dockmenu_container</span></div></td></tr>
        <tr><td><div class="d-flex align-items-center"><svg width="14" height="14"><use href="#clip"/></svg><span class="iname">inner</span></div></td></tr>
        <tr class="focus"><td><div class="d-flex align-items-center"><svg width="14" height="14"><use href="#clip"/></svg><span class="iname">item</span></div></td></tr>
       </tbody>
      </table>
      <svg class="note" id="brace" width="10" height="30"><path d="M1 1.500c4 0 4 1 4 5 0 5-1 7 4 8-5 1-4 4-4 8s0 5-4 5" fill="none" stroke="#f00" stroke-width="2.200"/></svg>
      <svg class="note" id="arrowLib" width="68" height="36"><use href="#arrow"/></svg>
     </div>
     <div class="d-flex flex-column align-items-center vs p-0 gap-0 sidecol">
      <button class="sidebtn" aria-label="Sort"><svg width="8" height="9"><path d="M4 0v3M2.500 3.500h3M1.500 6h5M0 8.500h8" stroke="#000"/></svg></button>
      <button class="sidebtn" aria-label="Wide view"><svg width="11" height="10"><path d="M1 1h9v8H1zM1 2.500h9" fill="#fff" stroke="#000"/></svg></button>
      <button class="sidebtn" aria-label="Narrow view"><svg width="7" height="10"><path d="M1 1h5v8H1zM1 2.500h5" fill="#fff" stroke="#998"/></svg></button>
      <button class="sbtn off" aria-label="Scroll up" disabled><svg width="9" height="9" opacity=".3"><use href="#up"/></svg></button>
      <div class="flex-grow-1"></div>
      <button class="sbtn off" aria-label="Scroll down" disabled><svg width="9" height="9" opacity=".3"><use href="#down"/></svg></button>
     </div>
    </div>
    <div class="d-flex align-items-center libfoot">
     <button aria-label="New symbol"><svg width="13" height="13"><path d="M3.500 1.500h6l3 3v7.500h-9z" fill="#fff" stroke="#222"/><path d="M0 7h6M3 4v6" stroke="#10208c" stroke-width="1.600"/></svg></button>
     <button class="ms-1" aria-label="New folder"><svg width="16" height="13"><use href="#addfolder"/></svg></button>
     <button class="ms-1" aria-label="Item properties"><svg width="10" height="10"><circle cx="5" cy="5" r="5" fill="#101c70"/><path d="M5.500 2v1M5 4.500v3.500" stroke="#fff" stroke-width="1.400"/></svg></button>
     <button class="ms-auto me-1" aria-label="Delete item"><svg width="12" height="13"><use href="#bin"/></svg></button>
     <div class="hs libhs">
      <button class="sbtn" aria-label="Scroll left"><svg width="9" height="9"><use href="#left"/></svg></button>
      <div class="thumb" id="thumbLib"><svg width="8" height="7"><path d="M.5 0v7M2.500 0v7M4.500 0v7M6.500 0v7" stroke="#fff"/></svg></div>
      <div class="flex-grow-1"></div>
      <button class="sbtn" aria-label="Scroll right"><svg width="9" height="9"><use href="#right"/></svg></button>
     </div>
    </div>
   </div>
  </aside>
 </div>
</div>
</body>
</html>
